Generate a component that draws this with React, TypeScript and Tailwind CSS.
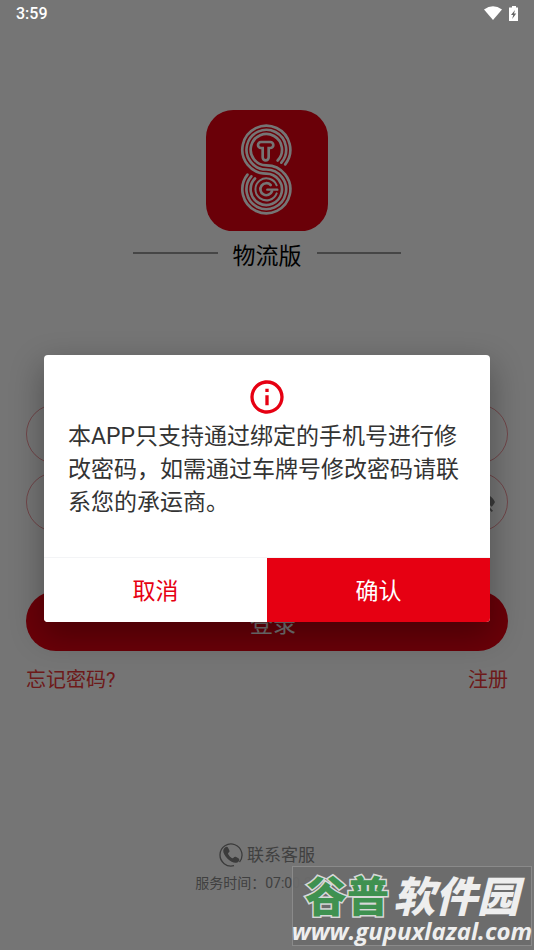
import React from "react";
import { MdInfoOutline, MdVisibilityOff } from "react-icons/md";

const strands = [
  "M237.700 163.300A72 72 0 1 0 181 191A47 47 0 1 1 147 205.500",
  "M226 158A59.500 59.500 0 1 0 181 178.500A59.500 59.500 0 1 1 136 199",
  "M215 151.500A47 47 0 1 0 181 166A72 72 0 1 1 124.300 193.700",
];

const Logo: React.FC = () => (
  <svg viewBox="0 0 366 364" className="w-[122px]" aria-hidden="true">
    <rect width="366" height="364" rx="82" fill="#e60012" />
    <g fill="none" stroke="#ffffff" strokeLinecap="round" strokeLinejoin="round">
      {strands.map((d) => (
        <path key={d} d={d} strokeWidth="8" />
      ))}
      <path d="M165 105H193M179 105V142" strokeWidth="26" />
      <path d="M165 105H193M179 105V142" strokeWidth="10" stroke="#e60012" />
      <path d="M212 226A33 33 0 1 0 212 250" strokeWidth="6" />
      <path d="M194 225A18 18 0 1 0 198 244" strokeWidth="8" />
      <path d="M184 239H214" strokeWidth="7" />
    </g>
  </svg>
);

const CallIcon: React.FC = () => (
  <svg viewBox="0 0 24 24" className="size-6" aria-hidden="true">
    <path
      d="M20.500 19A11 11 0 1 0 15 22.600"
      fill="none"
      stroke="#808080"
      strokeWidth="1.300"
    />
    <path
      d="M6 4.500c1.400-1 2.500-.8 3.200.5l1.100 2.200c.5 1.100.2 1.900-.9 2.600-.5.500-.4 1 0 1.800.8 1.400 1.900 2.500 3.300 3.300.8.400 1.300.4 1.800-.1.700-1.100 1.600-1.400 2.700-.8l2.200 1.300c1.200.8 1.300 1.900.2 3.100-1.700 1.900-4.200 1.900-7 .3-3.300-1.800-5.700-4.300-7.400-7.500-1.500-2.800-1.300-5 .8-6.700z"
      fill="#808080"
    />
  </svg>
);

const StatusBar: React.FC = () => (
  <header className="relative z-20 flex h-7 items-center justify-between px-4 text-white">
    <span className="text-base font-medium">3:59</span>
    <svg viewBox="0 0 34 16" className="h-4 w-[34px]" aria-hidden="true">
      <path d="M0 3.500Q9 -3 18 3.500L9 14Z" fill="#ffffff" />
      <path d="M25 1.500h3V0h4v1.500h2V15h-9z" fill="#ffffff" />
      <path d="M31 4l-4 5h2.200l-1 4 4-5.500h-2.200z" fill="#666666" />
    </svg>
  </header>
);

const LoginPage: React.FC = () => {
  const field =
    "h-[60px] w-full rounded-full border border-[#e60012]/40 bg-transparent px-6 text-lg outline-none";

  return (
    <main className="flex flex-col items-center px-[26px] pt-[82px]">
      <Logo />
      <div className="mt-0.5 flex w-[268px] items-center gap-[15px]">
        <span className="h-0.5 flex-1 bg-[#999999]" />
        <h1 className="pt-2 text-[23px] leading-8 text-black">物流版</h1>
        <span className="h-0.5 flex-1 bg-[#999999]" />
      </div>

      <form
        className="mt-[131px] flex w-full flex-col gap-2"
        onSubmit={(e) => e.preventDefault()}
      >
        <input type="tel" aria-label="手机号" className={field} />
        <div className="relative">
          <input type="password" aria-label="密码" className={field} />
          <button
            type="button"
            aria-label="显示密码"
            className="absolute inset-y-0 right-3 text-[#808080]"
          >
            <MdVisibilityOff size={24} />
          </button>
        </div>
        <button
          type="submit"
          className="mt-[51px] h-[60px] rounded-full bg-[#e60012] pt-2 pl-3 text-[23px] text-white"
        >
          登录
        </button>
      </form>

      <nav className="mt-3.5 flex w-full justify-between text-xl leading-[30px] text-[#ee3a3a]">
        <a href="#forgot">忘记密码?</a>
        <a href="#register">注册</a>
      </nav>

      <footer className="mt-[148px] flex flex-col items-center text-[#8c8c8c]">
        <a href="#service" className="flex items-center gap-1 text-[17px] leading-6">
          <CallIcon />
          联系客服
        </a>
        <p className="mt-1.5 text-sm leading-5">服务时间：07:00-22:00</p>
      </footer>
    </main>
  );
};

const ConfirmDialog: React.FC = () => (
  <div className="absolute inset-0 z-10 flex items-center justify-center bg-black/54 px-11 pt-[27px]">
    <section
      role="dialog"
      aria-modal="true"
      aria-describedby="dialog-text"
      className="w-full overflow-hidden rounded shadow-[0_12px_32px_2px_rgba(0,0,0,0.3)]"
    >
      <div className="flex flex-col items-center bg-white px-6 pt-[22px] pb-[38px]">
        <MdInfoOutline size={40} className="text-[#e60012]" />
        <p
          id="dialog-text"
          className="mt-[3px] w-full text-[23px] leading-[33px] text-[#333333]"
        >
          本APP只支持通过绑定的手机号进行修改密码，如需通过车牌号修改密码请联系您的承运商。
        </p>
      </div>
      <div className="grid grid-cols-2 border-t border-gray-100 bg-white text-[23px]">
        <button type="button" className="h-16 bg-white pt-1 text-[#e60012]">
          取消
        </button>
        <button type="button" className="h-16 bg-[#e60012] pt-1 text-white">
          确认
        </button>
      </div>
    </section>
  </div>
);

const Watermark: React.FC = () => (
  <aside className="absolute right-0.5 bottom-1 z-30 flex h-20 w-[240px] flex-col items-center justify-end border border-[#8a8a8a] bg-[#6b6b6b]/95 pb-0.5 whitespace-nowrap">
    <p className="flex gap-1 text-[42px] leading-[42px] font-black text-[#eeeeee]">
      <span className="text-[#3f9150] [-webkit-text-stroke:3px_#d8d8d8] [paint-order:stroke_fill]">
        谷普
      </span>
      <span className="italic">软件园</span>
    </p>
    <p className="font-['Open_Sans',sans-serif] text-2xl leading-6 font-bold text-[#eeeeee] italic">
      www.gupuxlazal.com
    </p>
  </aside>
);

export default function App() {
  return (
    <div className="relative min-h-screen overflow-hidden bg-white font-['Roboto','Noto_Sans_CJK_SC',sans-serif]">
      <StatusBar />
      <LoginPage />
      <ConfirmDialog />
      <Watermark />
    </div>
  );
}
